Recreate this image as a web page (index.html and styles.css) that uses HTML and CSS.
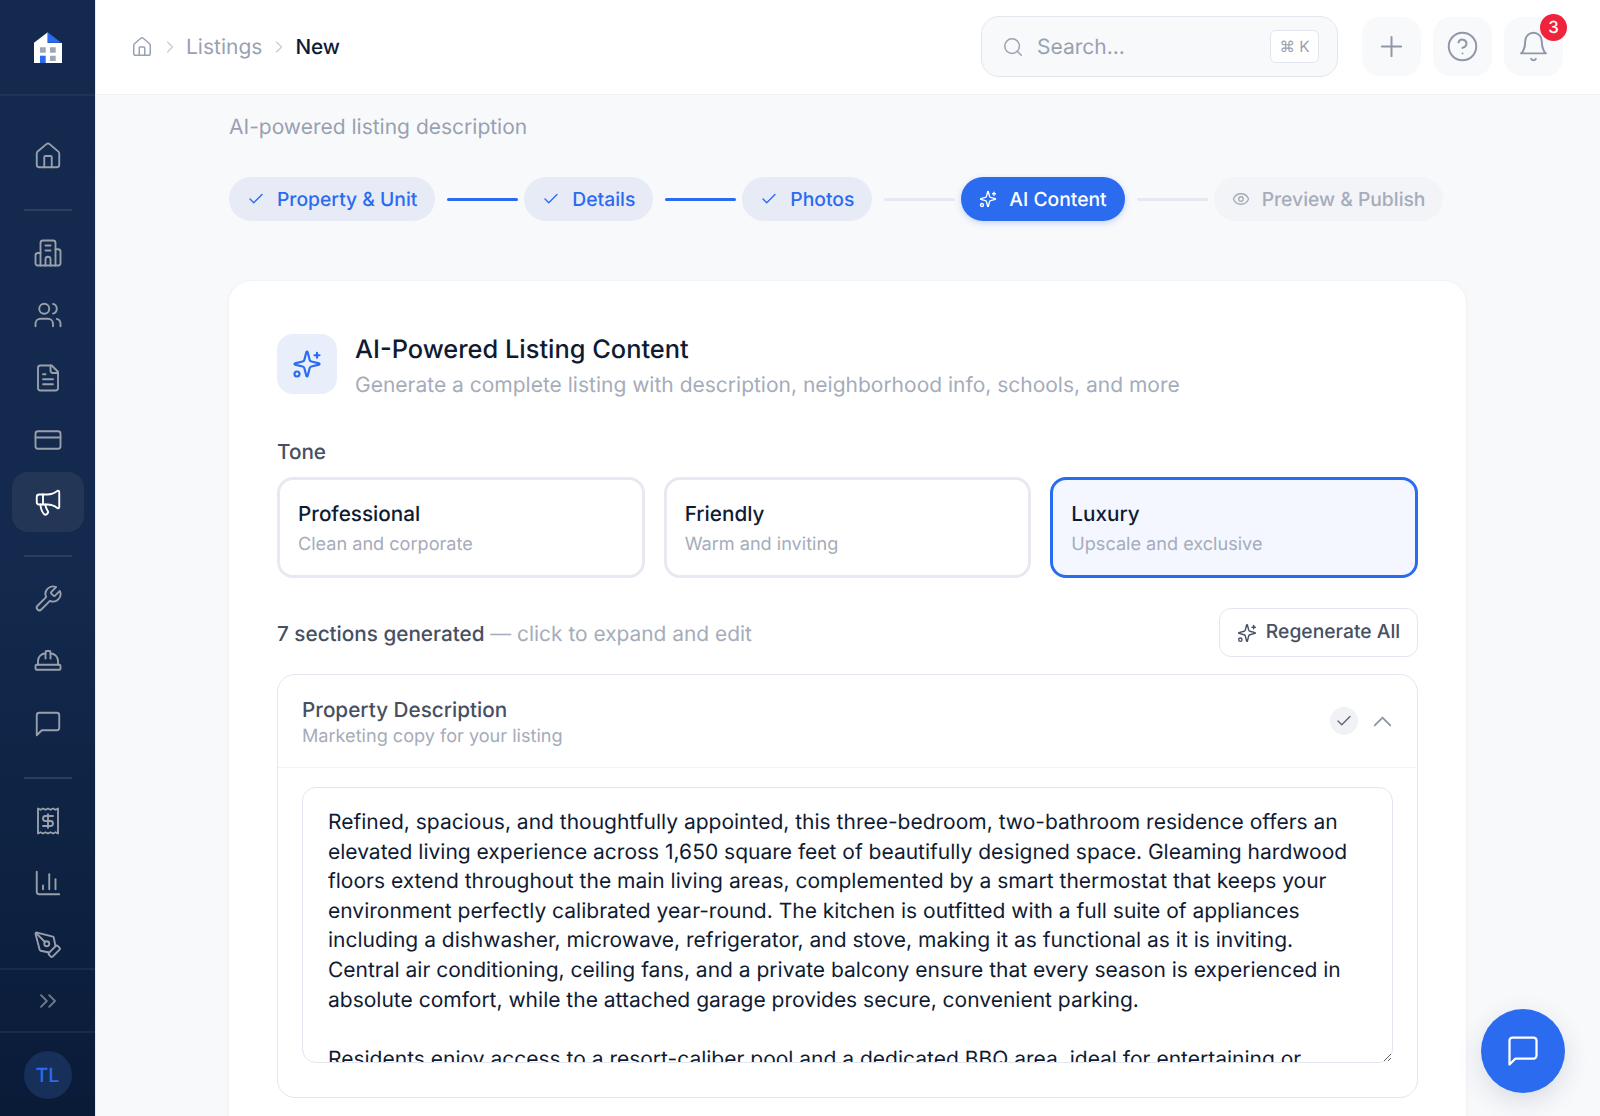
FILE: index.html
```html
<!DOCTYPE html>
<html lang="en">
<head>
<meta charset="utf-8">
<title>New Listing</title>
<link rel="stylesheet" href="styles.css">
</head>
<body>
<svg class="sprite" aria-hidden="true">
  <symbol id="i-house" viewBox="0 0 24 24"><path d="M15 21v-8a1 1 0 0 0-1-1h-4a1 1 0 0 0-1 1v8"/><path d="M3 10a2 2 0 0 1 .709-1.528l7-5.999a2 2 0 0 1 2.582 0l7 5.999A2 2 0 0 1 21 10v9a2 2 0 0 1-2 2H5a2 2 0 0 1-2-2z"/></symbol>
  <symbol id="i-building" viewBox="0 0 24 24"><path d="M6 22V4a2 2 0 0 1 2-2h8a2 2 0 0 1 2 2v18Z"/><path d="M6 12H4a2 2 0 0 0-2 2v6a2 2 0 0 0 2 2h2"/><path d="M18 9h2a2 2 0 0 1 2 2v9a2 2 0 0 1-2 2h-2"/><path d="M10 6h4"/><path d="M10 10h4"/><path d="M10 22v-5a2 2 0 0 1 4 0v5"/></symbol>
  <symbol id="i-users" viewBox="0 0 24 24"><path d="M16 21v-2a4 4 0 0 0-4-4H6a4 4 0 0 0-4 4v2"/><circle cx="9" cy="7" r="4"/><path d="M22 21v-2a4 4 0 0 0-3-3.87"/><path d="M16 3.13a4 4 0 0 1 0 7.75"/></symbol>
  <symbol id="i-file" viewBox="0 0 24 24"><path d="M15 2H6a2 2 0 0 0-2 2v16a2 2 0 0 0 2 2h12a2 2 0 0 0 2-2V7Z"/><path d="M14 2v4a2 2 0 0 0 2 2h4"/><path d="M10 9H8"/><path d="M16 13H8"/><path d="M16 17H8"/></symbol>
  <symbol id="i-card" viewBox="0 0 24 24"><rect x="2" y="5" width="20" height="14" rx="2"/><path d="M2 10h20"/></symbol>
  <symbol id="i-mega" viewBox="0 0 24 24"><path d="M11 6a13 13 0 0 0 8.4-2.8A1 1 0 0 1 21 4v12a1 1 0 0 1-1.6.8A13 13 0 0 0 11 14H5a2 2 0 0 1-2-2V8a2 2 0 0 1 2-2z"/><path d="M6 14a12 12 0 0 0 2.4 7.2 2 2 0 0 0 3.2-2.4A8 8 0 0 1 10 14"/><path d="M8 6v8"/></symbol>
  <symbol id="i-wrench" viewBox="0 0 24 24"><path d="M14.7 6.3a1 1 0 0 0 0 1.4l1.6 1.6a1 1 0 0 0 1.4 0l3.77-3.77a6 6 0 0 1-7.94 7.94l-6.91 6.91a2.12 2.12 0 0 1-3-3l6.91-6.91a6 6 0 0 1 7.94-7.94l-3.76 3.76z"/></symbol>
  <symbol id="i-hat" viewBox="0 0 24 24"><path d="M10 10V5a1 1 0 0 1 1-1h2a1 1 0 0 1 1 1v5"/><path d="M14 6a6 6 0 0 1 6 6v3"/><path d="M4 15v-3a6 6 0 0 1 6-6"/><rect x="2" y="15" width="20" height="4" rx="1"/></symbol>
  <symbol id="i-msg" viewBox="0 0 24 24"><path d="M21 15a2 2 0 0 1-2 2H7l-4 4V5a2 2 0 0 1 2-2h14a2 2 0 0 1 2 2z"/></symbol>
  <symbol id="i-receipt" viewBox="0 0 24 24"><path d="M4 2v20l2-1 2 1 2-1 2 1 2-1 2 1 2-1 2 1V2l-2 1-2-1-2 1-2-1-2 1-2-1-2 1Z"/><path d="M16 8h-6a2 2 0 1 0 0 4h4a2 2 0 1 1 0 4H8"/><path d="M12 17.5v-11"/></symbol>
  <symbol id="i-chart" viewBox="0 0 24 24"><path d="M3 3v16a2 2 0 0 0 2 2h16"/><path d="M18 17V9"/><path d="M13 17V5"/><path d="M8 17v-3"/></symbol>
  <symbol id="i-pen" viewBox="0 0 24 24"><path d="M15.707 21.293a1 1 0 0 1-1.414 0l-1.586-1.586a1 1 0 0 1 0-1.414l5.586-5.586a1 1 0 0 1 1.414 0l1.586 1.586a1 1 0 0 1 0 1.414z"/><path d="m18 13-1.375-6.874a1 1 0 0 0-.746-.776L3.235 2.028a1 1 0 0 0-1.207 1.207L5.35 15.879a1 1 0 0 0 .776.746L13 18"/><path d="m2.3 2.3 7.286 7.286"/><circle cx="11" cy="11" r="2"/></symbol>
  <symbol id="i-chevrons" viewBox="0 0 24 24"><path d="m6 17 5-5-5-5"/><path d="m13 17 5-5-5-5"/></symbol>
  <symbol id="i-spark" viewBox="0 0 24 24"><path d="M9.937 15.5A2 2 0 0 0 8.5 14.063l-6.135-1.582a.5.5 0 0 1 0-.962L8.5 9.936A2 2 0 0 0 9.937 8.5l1.582-6.135a.5.5 0 0 1 .963 0L14.063 8.5A2 2 0 0 0 15.5 9.937l6.135 1.581a.5.5 0 0 1 0 .964L15.5 14.063a2 2 0 0 0-1.437 1.437l-1.582 6.135a.5.5 0 0 1-.963 0z"/><path d="M20 3v4"/><path d="M22 5h-4"/><circle cx="4" cy="20" r="2"/></symbol>
  <symbol id="i-search" viewBox="0 0 24 24"><circle cx="11" cy="11" r="8"/><path d="m21 21-4.3-4.3"/></symbol>
  <symbol id="i-plus" viewBox="0 0 24 24"><path d="M5 12h14"/><path d="M12 5v14"/></symbol>
  <symbol id="i-help" viewBox="0 0 24 24"><circle cx="12" cy="12" r="10"/><path d="M9.09 9a3 3 0 0 1 5.83 1c0 2-3 3-3 3"/><path d="M12 17h.01"/></symbol>
  <symbol id="i-bell" viewBox="0 0 24 24"><path d="M6 8a6 6 0 0 1 12 0c0 7 3 9 3 9H3s3-2 3-9"/><path d="M10.3 21a1.94 1.94 0 0 0 3.4 0"/></symbol>
  <symbol id="i-eye" viewBox="0 0 24 24"><path d="M2.062 12.348a1 1 0 0 1 0-.696 10.75 10.75 0 0 1 19.876 0 1 1 0 0 1 0 .696 10.75 10.75 0 0 1-19.876 0"/><circle cx="12" cy="12" r="3"/></symbol>
  <symbol id="i-check" viewBox="0 0 24 24"><path d="M20 6 9 17l-5-5"/></symbol>
  <symbol id="i-up" viewBox="0 0 24 24"><path d="m18 15-6-6-6 6"/></symbol>
  <symbol id="i-right" viewBox="0 0 24 24"><path d="m9 18 6-6-6-6"/></symbol>
</svg>

<div class="app">
  <aside class="sidebar">
    <div class="brand">
      <svg class="logo" viewBox="0 0 28 31">
        <path class="logo-wall" d="M0 10.7 13.7.3V11H28v20H0z"/>
        <path class="logo-roof" d="M13.7.3 27.3 10.7H13.7z"/>
        <path class="logo-win" d="M6 15.3h5.7v5.4H6zM16 15.3h5.7v5.4H16zM16 23.7h5.7V29H16z"/>
        <path class="logo-roof" d="M6 23.7h5.7V31H6z"/>
      </svg>
    </div>
    <nav class="nav">
      <a class="nav-item"><svg class="nav-icon"><use href="#i-house"/></svg></a>
      <hr class="nav-div">
      <a class="nav-item"><svg class="nav-icon"><use href="#i-building"/></svg></a>
      <a class="nav-item"><svg class="nav-icon"><use href="#i-users"/></svg></a>
      <a class="nav-item"><svg class="nav-icon"><use href="#i-file"/></svg></a>
      <a class="nav-item"><svg class="nav-icon"><use href="#i-card"/></svg></a>
      <a class="nav-item active"><svg class="nav-icon"><use href="#i-mega"/></svg></a>
      <hr class="nav-div">
      <a class="nav-item"><svg class="nav-icon"><use href="#i-wrench"/></svg></a>
      <a class="nav-item"><svg class="nav-icon"><use href="#i-hat"/></svg></a>
      <a class="nav-item"><svg class="nav-icon"><use href="#i-msg"/></svg></a>
      <hr class="nav-div">
      <a class="nav-item"><svg class="nav-icon"><use href="#i-receipt"/></svg></a>
      <a class="nav-item"><svg class="nav-icon"><use href="#i-chart"/></svg></a>
      <a class="nav-item"><svg class="nav-icon"><use href="#i-pen"/></svg></a>
    </nav>
    <div class="collapse"><svg class="collapse-icon"><use href="#i-chevrons"/></svg></div>
    <div class="user"><span class="avatar">TL</span></div>
  </aside>

  <div class="column">
    <header class="topbar">
      <div class="crumbs">
        <svg class="crumb-home"><use href="#i-house"/></svg>
        <svg class="crumb-sep"><use href="#i-right"/></svg>
        <span class="crumb-link">Listings</span>
        <svg class="crumb-sep"><use href="#i-right"/></svg>
        <span class="crumb-now">New</span>
      </div>
      <div class="search">
        <svg class="search-icon"><use href="#i-search"/></svg>
        <span class="search-text">Search...</span>
        <kbd class="kbd">⌘ K</kbd>
      </div>
      <button class="tool"><svg class="tool-icon"><use href="#i-plus"/></svg></button>
      <button class="tool"><svg class="tool-icon"><use href="#i-help"/></svg></button>
      <button class="tool"><svg class="tool-icon"><use href="#i-bell"/></svg><span class="badge">3</span></button>
    </header>

    <main class="main">
      <div class="page">
        <p class="page-sub">AI-powered listing description</p>
        <div class="steps">
          <div class="step done"><svg class="step-icon"><use href="#i-check"/></svg>Property &amp; Unit</div>
          <span class="line on"></span>
          <div class="step done"><svg class="step-icon"><use href="#i-check"/></svg>Details</div>
          <span class="line on"></span>
          <div class="step done"><svg class="step-icon"><use href="#i-check"/></svg>Photos</div>
          <span class="line"></span>
          <div class="step current"><svg class="step-icon"><use href="#i-spark"/></svg>AI Content</div>
          <span class="line"></span>
          <div class="step todo"><svg class="step-icon"><use href="#i-eye"/></svg>Preview &amp; Publish</div>
        </div>

        <section class="card">
          <div class="card-head">
            <div class="head-icon"><svg class="head-svg"><use href="#i-spark"/></svg></div>
            <div>
              <h2 class="card-title">AI-Powered Listing Content</h2>
              <p class="card-sub">Generate a complete listing with description, neighborhood info, schools, and more</p>
            </div>
          </div>

          <div class="tone-label">Tone</div>
          <div class="tones">
            <div class="tone"><div class="tone-name">Professional</div><div class="tone-desc">Clean and corporate</div></div>
            <div class="tone"><div class="tone-name">Friendly</div><div class="tone-desc">Warm and inviting</div></div>
            <div class="tone selected"><div class="tone-name">Luxury</div><div class="tone-desc">Upscale and exclusive</div></div>
          </div>

          <div class="gen-row">
            <div class="gen-text"><strong class="gen-count">7 sections generated</strong> — click to expand and edit</div>
            <button class="regen"><svg class="regen-icon"><use href="#i-spark"/></svg>Regenerate All</button>
          </div>

          <div class="section">
            <div class="section-head">
              <div class="section-titles">
                <div class="section-title">Property Description</div>
                <div class="section-sub">Marketing copy for your listing</div>
              </div>
              <span class="approve"><svg class="approve-icon"><use href="#i-check"/></svg></span>
              <svg class="section-chev"><use href="#i-up"/></svg>
            </div>
            <div class="section-body">
              <textarea class="editor" spellcheck="false">Refined, spacious, and thoughtfully appointed, this three-bedroom, two-bathroom residence offers an elevated living experience across 1,650 square feet of beautifully designed space. Gleaming hardwood floors extend throughout the main living areas, complemented by a smart thermostat that keeps your environment perfectly calibrated year-round. The kitchen is outfitted with a full suite of appliances including a dishwasher, microwave, refrigerator, and stove, making it as functional as it is inviting. Central air conditioning, ceiling fans, and a private balcony ensure that every season is experienced in absolute comfort, while the attached garage provides secure, convenient parking.

Residents enjoy access to a resort-caliber pool and a dedicated BBQ area, ideal for entertaining or unwinding at the end of the day.</textarea>
            </div>
          </div>
        </section>
      </div>
    </main>
  </div>
</div>

<button class="fab"><svg class="fab-icon"><use href="#i-msg"/></svg></button>
</body>
</html>
```
FILE: styles.css
```css
* { box-sizing: border-box; }
html, body { margin: 0; height: 100%; overflow: hidden; }
body { font-family: Inter, "Liberation Sans", sans-serif; color: #0f1b33; background: #f8f9fb; text-rendering: geometricPrecision; }
.sprite { display: none; }
svg { fill: none; stroke: currentColor; stroke-width: 2; stroke-linecap: round; stroke-linejoin: round; flex: none; }
p, h2 { margin: 0; }
button { font: inherit; border: 0; background: none; padding: 0; text-rendering: inherit; }

.app { display: flex; height: 100vh; }

/* Sidebar */
.sidebar { width: 95px; flex: none; display: flex; flex-direction: column; background: linear-gradient(180deg, #14294d 0%, #132a4e 50%, #0a1b38 100%); box-shadow: 1px 0 0 #e6e9f0; position: relative; z-index: 1; }
.brand { height: 96px; flex: none; display: flex; align-items: center; justify-content: center; border-bottom: 2px solid #1e3356; }
.logo { width: 28px; height: 31px; stroke: none; }
.logo-wall { fill: #fff; }
.logo-roof { fill: #2b6bef; }
.logo-win { fill: #9da7b8; }
.nav { flex: 1; min-height: 0; display: flex; flex-direction: column; align-items: center; gap: 2px; padding-top: 30px; overflow: hidden; }
.nav-item { width: 72px; height: 60.2px; flex: none; display: flex; align-items: center; justify-content: center; border-radius: 16px; color: #9aa0ab; }
.nav-item.active { background: #243655; color: #fff; }
.nav-icon { width: 30px; height: 30px; stroke-width: 1.5; }
.nav-div { width: 48px; height: 2px; flex: none; margin: 21px 0 10px; border: 0; background: #2a3e60; }
.collapse { height: 63px; flex: none; display: flex; align-items: center; justify-content: center; border-top: 2px solid #162c4f; color: #6f7a8c; }
.collapse-icon { width: 28px; height: 28px; stroke-width: 1.6; }
.user { height: 85px; flex: none; display: flex; align-items: center; justify-content: center; border-top: 2px solid #162c4f; }
.avatar { width: 48px; height: 48px; border-radius: 50%; background: #16305a; color: #2b6bef; display: flex; align-items: center; justify-content: center; font-size: 19.6px; font-weight: 500; }

/* Top bar */
.column { flex: 1; min-width: 0; display: flex; flex-direction: column; }
.topbar { height: 95px; flex: none; display: flex; align-items: center; gap: 12px; padding: 0 37px 1px 36px; background: #fff; border-bottom: 1px solid #f0f2f6; }
.crumbs { flex: 1; display: flex; align-items: center; gap: 5px; font-size: 21px; line-height: 1; padding-top: 1px; }
.crumb-home { width: 22px; height: 22px; color: #98a1b1; stroke-width: 1.6; }
.crumb-sep { width: 20px; height: 20px; color: #c6cbd5; stroke-width: 1.4; margin: 0 1.5px; }
.crumb-link { color: #98a1b1; padding-top: 1px; }
.crumb-now { color: #0f1b33; font-size: 20.7px; font-weight: 500; padding-top: 1px; }
.search { width: 357px; height: 61px; margin-right: 12px; display: flex; align-items: center; padding: 0 18px 0 20px; background: #f8f9fb; border: 1px solid #e2e6ee; border-radius: 18px; }
.search-icon { width: 22px; height: 22px; color: #98a1b1; stroke-width: 1.6; margin-right: 13px; }
.search-text { flex: 1; color: #98a1b1; font-size: 21px; padding-top: 2px; }
.kbd { width: 49px; height: 33px; display: flex; align-items: center; justify-content: center; background: #fff; border: 1px solid #e2e6ee; border-radius: 6px; color: #98a1b1; font: 15.4px Inter, "Liberation Sans", sans-serif; text-rendering: inherit; }
.tool { width: 59px; height: 59px; flex: none; position: relative; display: flex; align-items: center; justify-content: center; background: #f8f9fb; border-radius: 18px; color: #8f98a8; }
.tool-icon { width: 33px; height: 33px; stroke-width: 1.45; }
.badge { position: absolute; top: -3px; right: -4px; width: 27px; height: 27px; border-radius: 50%; background: #f0233c; color: #fff; font-size: 16.8px; font-weight: 500; display: flex; align-items: center; justify-content: center; }

/* Main */
.main { flex: 1; min-height: 0; overflow: hidden; }
.page { width: 1237px; margin: 0 auto; padding-top: 18px; }
.page-sub { color: #98a1b1; font-size: 21px; line-height: 29px; }
.steps { display: flex; align-items: center; margin-top: 35px; }
.step { height: 44px; display: flex; align-items: center; gap: 12px; padding: 0 18px; border-radius: 22px; font-size: 19.3px; font-weight: 500; white-space: nowrap; }
.step-icon { width: 18px; height: 18px; stroke-width: 1.8; }
.step.done { background: #e7ebf6; color: #2b6bef; }
.step.current { background: #2b6bef; color: #fff; box-shadow: 0 2px 6px rgba(43, 107, 239, .25); }
.step.todo { background: #f3f4f8; color: #a5acba; }
.line { width: 71px; height: 3px; margin: 0 6px 0 12px; flex: none; border-radius: 2px; background: #e6e9f1; }
.line.on { background: #2b6bef; }

/* Card */
.card { margin-top: 60px; padding: 53px 48px 48px; background: #fff; border-radius: 22px; box-shadow: 0 0 0 1px #f1f3f7, 0 2px 8px rgba(20, 40, 80, .03); }
.card-head { display: flex; align-items: flex-start; gap: 18px; }
.head-icon { width: 60px; height: 60px; flex: none; display: flex; align-items: center; justify-content: center; background: #e9eefb; border-radius: 16px; color: #2b6bef; }
.head-svg { width: 30px; height: 30px; stroke-width: 1.7; }
.card-title { font-size: 25.4px; line-height: 34px; font-weight: 500; color: #0f1b33; margin-top: -1px; }
.card-sub { margin-top: 5px; font-size: 21px; line-height: 28px; color: #a5acba; }
.tone-label { margin-top: 38px; font-size: 20.7px; line-height: 28px; font-weight: 500; color: #465062; }
.tones { display: grid; grid-template-columns: repeat(3, 1fr); gap: 19px; margin-top: 11px; }
.tone { height: 101px; padding: 20px 18px 0; border: 3px solid #e6e9f1; border-radius: 16px; background: #fff; }
.tone.selected { border-color: #2b6bef; background: #f4f7ff; }
.tone-name { font-size: 20.7px; line-height: 28px; font-weight: 500; color: #0f1b33; }
.tone-desc { margin-top: 4px; font-size: 18.1px; line-height: 24px; color: #a5acba; }

.gen-row { display: flex; align-items: center; justify-content: space-between; margin-top: 30px; }
.gen-text { font-size: 20.9px; color: #a5acba; padding-top: 2px; }
.gen-count { font-size: 20.7px; font-weight: 500; color: #465062; }
.regen { width: 199px; height: 49px; padding-bottom: 4px; display: flex; align-items: center; justify-content: center; gap: 9px; background: #fff; border: 1px solid #e2e6ee; border-radius: 12px; color: #465062; font-size: 19.3px; font-weight: 500; }
.regen-icon { width: 20px; height: 20px; stroke-width: 1.7; margin-top: 4px; }

.section { margin-top: 17px; border: 1px solid #e2e6ee; border-radius: 18px; overflow: hidden; }
.section-head { height: 93px; display: flex; align-items: center; padding: 0 24px; border-bottom: 1px solid #f1f3f7; }
.section-titles { flex: 1; padding-top: 2px; }
.section-title { font-size: 20.7px; line-height: 28px; font-weight: 500; color: #465062; }
.section-sub { font-size: 18.1px; line-height: 25px; color: #a5acba; }
.approve { width: 28px; height: 28px; display: flex; align-items: center; justify-content: center; border-radius: 50%; background: #f1f2f5; color: #5d6676; }
.approve-icon { width: 18px; height: 18px; stroke-width: 1.8; }
.section-chev { width: 31px; height: 31px; margin: 0 -5px 0 9px; color: #8f98a8; stroke-width: 1.5; }
.section-body { padding: 19px 24px 34px; }
.editor { display: block; width: 100%; height: 276px; padding: 20px 25px 18px; border: 1px solid #e2e6ee; border-radius: 14px; resize: vertical; overflow: hidden; outline: 0; font: 400 21px/29.6px Inter, "Liberation Sans", sans-serif; color: #0f1b33; text-rendering: geometricPrecision; }

.fab { position: fixed; right: 35px; bottom: 23px; width: 84px; height: 84px; display: flex; align-items: center; justify-content: center; border-radius: 50%; background: #2b6bef; color: #fff; box-shadow: 0 8px 26px rgba(20, 40, 80, .14); }
.fab-icon { width: 36px; height: 36px; stroke-width: 1.5; }
```
